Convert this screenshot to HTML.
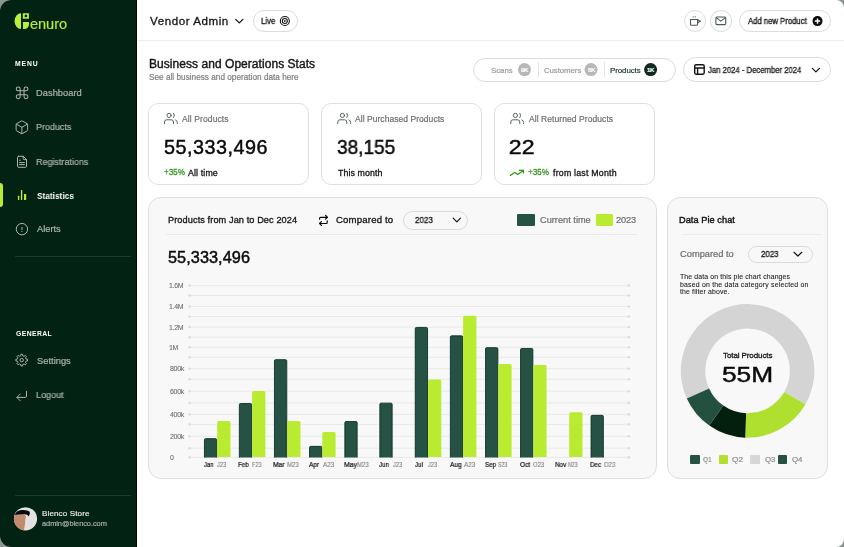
<!DOCTYPE html>
<html><head><meta charset="utf-8"><style>
html,body{margin:0;padding:0;width:844px;height:547px;overflow:hidden;background:#8c9692;}
#app{position:absolute;left:0;top:0;width:844px;height:547px;border-radius:11px 8px 8px 11px;overflow:hidden;background:#ffffff;font-family:"Liberation Sans",sans-serif;}
.t{position:absolute;white-space:nowrap;will-change:transform;}
.bd{position:absolute;width:13px;height:6px;line-height:6px;font-size:6.2px;font-weight:700;color:#fff;text-align:center;letter-spacing:-0.4px;will-change:transform;-webkit-text-stroke:0.15px #fff;}
</style></head><body><div id="app">
<div style="position:absolute;left:0px;top:0px;width:136px;height:547px;background:#022214;"></div><div style="position:absolute;left:136px;top:0px;width:1px;height:547px;background:#000;"></div><div style="position:absolute;left:137px;top:40px;width:707px;height:1px;background:#ececec;"></div><div style="position:absolute;left:0px;top:183.4px;width:3.2px;height:23.6px;background:#b9ec30;border-radius:0 3px 3px 0;"></div><div style="position:absolute;left:15px;top:256px;width:116px;height:1px;background:#1d3a2d;"></div><div style="position:absolute;left:15px;top:495.2px;width:116px;height:1px;background:#1d3a2d;"></div><div style="position:absolute;left:253.4px;top:10.2px;width:45px;height:21.5px;box-sizing:border-box;border:1px solid #dcdcdc;border-radius:11px;"></div><div style="position:absolute;left:683.8px;top:10.2px;width:22px;height:22px;box-sizing:border-box;border:1px solid #dedede;border-radius:50%;"></div><div style="position:absolute;left:709.8px;top:10.2px;width:22.4px;height:22px;box-sizing:border-box;border:1px solid #dedede;border-radius:50%;"></div><div style="position:absolute;left:739.1px;top:10.2px;width:92px;height:22px;box-sizing:border-box;border:1px solid #dcdcdc;border-radius:11px;"></div><div style="position:absolute;left:473px;top:57.5px;width:203px;height:24.2px;box-sizing:border-box;border:1px solid #dcdcdc;border-radius:12px;"></div><div style="position:absolute;left:537.5px;top:62px;width:1px;height:15px;background:#e4e4e4;"></div><div style="position:absolute;left:603.7px;top:62px;width:1px;height:15px;background:#e4e4e4;"></div><div style="position:absolute;left:683.3px;top:57.1px;width:147.3px;height:24.8px;box-sizing:border-box;border:1px solid #dcdcdc;border-radius:12.5px;"></div><div style="position:absolute;left:148px;top:102.9px;width:160.5px;height:81.9px;box-sizing:border-box;border:1px solid #e0e0e0;border-radius:10px;"></div><div style="position:absolute;left:321.3px;top:102.9px;width:160.5px;height:81.9px;box-sizing:border-box;border:1px solid #e0e0e0;border-radius:10px;"></div><div style="position:absolute;left:494.3px;top:102.9px;width:160.5px;height:81.9px;box-sizing:border-box;border:1px solid #e0e0e0;border-radius:10px;"></div><div style="position:absolute;left:148.2px;top:197.3px;width:508.5px;height:282.0px;box-sizing:border-box;background:#f8f8f8;border:1px solid #dedede;border-radius:13px;"></div><div style="position:absolute;left:667.3px;top:197.2px;width:160.7px;height:282.0px;box-sizing:border-box;background:#f8f8f8;border:1px solid #dedede;border-radius:13px;"></div><div style="position:absolute;left:166.2px;top:234px;width:470.6px;height:1px;background:#e9e9e9;"></div><div style="position:absolute;left:681.8px;top:234px;width:140px;height:1px;background:#ebebeb;"></div><div style="position:absolute;left:402.7px;top:211px;width:65.8px;height:18.8px;box-sizing:border-box;border:1px solid #dadada;border-radius:9.5px;"></div><div style="position:absolute;left:747.5px;top:245.5px;width:65.9px;height:17px;box-sizing:border-box;border:1px solid #dadada;border-radius:8.5px;"></div><div style="position:absolute;left:516.8px;top:214px;width:18.2px;height:11.7px;background:#255244;border-radius:1px;"></div><div style="position:absolute;left:595.6px;top:214px;width:17.8px;height:11.7px;background:#b9ec30;border-radius:1px;"></div><div style="position:absolute;left:690.3px;top:455px;width:9.6px;height:9.2px;background:#255244;border-radius:1px;"></div><div style="position:absolute;left:718.5px;top:455px;width:9.6px;height:9.2px;background:#b3e030;border-radius:1px;"></div><div style="position:absolute;left:750px;top:455px;width:9.6px;height:9.2px;background:#d6d6d6;border-radius:1px;"></div><div style="position:absolute;left:777.9px;top:455px;width:9.6px;height:9.2px;background:#255244;border-radius:1px;"></div>
<svg width="844" height="547" viewBox="0 0 844 547" style="position:absolute;left:0;top:0"><line x1="190" y1="285.6" x2="629" y2="285.6" stroke="#e9e9e9" stroke-width="1"/><circle cx="189.6" cy="285.6" r="1.3" fill="#dcdcdc"/><circle cx="628.8" cy="285.6" r="1.3" fill="#dcdcdc"/><line x1="190" y1="306.5" x2="629" y2="306.5" stroke="#e9e9e9" stroke-width="1"/><circle cx="189.6" cy="306.5" r="1.3" fill="#dcdcdc"/><circle cx="628.8" cy="306.5" r="1.3" fill="#dcdcdc"/><line x1="190" y1="327.1" x2="629" y2="327.1" stroke="#e9e9e9" stroke-width="1"/><circle cx="189.6" cy="327.1" r="1.3" fill="#dcdcdc"/><circle cx="628.8" cy="327.1" r="1.3" fill="#dcdcdc"/><line x1="190" y1="347.3" x2="629" y2="347.3" stroke="#e9e9e9" stroke-width="1"/><circle cx="189.6" cy="347.3" r="1.3" fill="#dcdcdc"/><circle cx="628.8" cy="347.3" r="1.3" fill="#dcdcdc"/><line x1="190" y1="368.7" x2="629" y2="368.7" stroke="#e9e9e9" stroke-width="1"/><circle cx="189.6" cy="368.7" r="1.3" fill="#dcdcdc"/><circle cx="628.8" cy="368.7" r="1.3" fill="#dcdcdc"/><line x1="190" y1="391.2" x2="629" y2="391.2" stroke="#e9e9e9" stroke-width="1"/><circle cx="189.6" cy="391.2" r="1.3" fill="#dcdcdc"/><circle cx="628.8" cy="391.2" r="1.3" fill="#dcdcdc"/><line x1="190" y1="414.4" x2="629" y2="414.4" stroke="#e9e9e9" stroke-width="1"/><circle cx="189.6" cy="414.4" r="1.3" fill="#dcdcdc"/><circle cx="628.8" cy="414.4" r="1.3" fill="#dcdcdc"/><line x1="190" y1="436.3" x2="629" y2="436.3" stroke="#e9e9e9" stroke-width="1"/><circle cx="189.6" cy="436.3" r="1.3" fill="#dcdcdc"/><circle cx="628.8" cy="436.3" r="1.3" fill="#dcdcdc"/><line x1="190" y1="457.4" x2="629" y2="457.4" stroke="#e9e9e9" stroke-width="1"/><circle cx="189.6" cy="457.4" r="1.3" fill="#dcdcdc"/><circle cx="628.8" cy="457.4" r="1.3" fill="#dcdcdc"/><line x1="190" y1="295.5" x2="629" y2="295.5" stroke="#e9e9e9" stroke-width="1"/><circle cx="189.6" cy="295.5" r="1.3" fill="#dcdcdc"/><circle cx="628.8" cy="295.5" r="1.3" fill="#dcdcdc"/><line x1="190" y1="316.5" x2="629" y2="316.5" stroke="#e9e9e9" stroke-width="1"/><circle cx="189.6" cy="316.5" r="1.3" fill="#dcdcdc"/><circle cx="628.8" cy="316.5" r="1.3" fill="#dcdcdc"/><line x1="190" y1="337.2" x2="629" y2="337.2" stroke="#e9e9e9" stroke-width="1"/><circle cx="189.6" cy="337.2" r="1.3" fill="#dcdcdc"/><circle cx="628.8" cy="337.2" r="1.3" fill="#dcdcdc"/><line x1="190" y1="357.3" x2="629" y2="357.3" stroke="#e9e9e9" stroke-width="1"/><circle cx="189.6" cy="357.3" r="1.3" fill="#dcdcdc"/><circle cx="628.8" cy="357.3" r="1.3" fill="#dcdcdc"/><line x1="190" y1="379.3" x2="629" y2="379.3" stroke="#e9e9e9" stroke-width="1"/><circle cx="189.6" cy="379.3" r="1.3" fill="#dcdcdc"/><circle cx="628.8" cy="379.3" r="1.3" fill="#dcdcdc"/><line x1="190" y1="402.9" x2="629" y2="402.9" stroke="#e9e9e9" stroke-width="1"/><circle cx="189.6" cy="402.9" r="1.3" fill="#dcdcdc"/><circle cx="628.8" cy="402.9" r="1.3" fill="#dcdcdc"/><line x1="190" y1="424.4" x2="629" y2="424.4" stroke="#e9e9e9" stroke-width="1"/><circle cx="189.6" cy="424.4" r="1.3" fill="#dcdcdc"/><circle cx="628.8" cy="424.4" r="1.3" fill="#dcdcdc"/><line x1="190" y1="448.2" x2="629" y2="448.2" stroke="#e9e9e9" stroke-width="1"/><circle cx="189.6" cy="448.2" r="1.3" fill="#dcdcdc"/><circle cx="628.8" cy="448.2" r="1.3" fill="#dcdcdc"/><path d="M204.45,457.5 V439.85 Q204.45,438.65 205.65,438.65 H215.55 Q216.75,438.65 216.75,439.85 V457.5" fill="#255244" stroke="#0c3325" stroke-width="0.9"/><path d="M217.2,457.0 V422.4 Q217.2,420.9 218.7,420.9 H229.0 Q230.5,420.9 230.5,422.4 V457.0 Z" fill="#b9ec30"/><path d="M239.35,457.5 V404.75 Q239.35,403.55 240.55,403.55 H250.45 Q251.65,403.55 251.65,404.75 V457.5" fill="#255244" stroke="#0c3325" stroke-width="0.9"/><path d="M252.1,457.0 V392.5 Q252.1,391.0 253.6,391.0 H263.9 Q265.4,391.0 265.4,392.5 V457.0 Z" fill="#b9ec30"/><path d="M274.45,457.5 V360.85 Q274.45,359.65 275.65,359.65 H285.55 Q286.75,359.65 286.75,360.85 V457.5" fill="#255244" stroke="#0c3325" stroke-width="0.9"/><path d="M287.2,457.0 V422.4 Q287.2,420.9 288.7,420.9 H299.0 Q300.5,420.9 300.5,422.4 V457.0 Z" fill="#b9ec30"/><path d="M309.55,457.5 V447.55 Q309.55,446.35 310.75,446.35 H320.65 Q321.85,446.35 321.85,447.55 V457.5" fill="#255244" stroke="#0c3325" stroke-width="0.9"/><path d="M322.3,457.0 V433.4 Q322.3,431.9 323.8,431.9 H334.1 Q335.6,431.9 335.6,433.4 V457.0 Z" fill="#b9ec30"/><path d="M344.85,457.5 V422.75 Q344.85,421.55 346.05,421.55 H355.95 Q357.15,421.55 357.15,422.75 V457.5" fill="#255244" stroke="#0c3325" stroke-width="0.9"/><path d="M379.85,457.5 V404.35 Q379.85,403.15 381.05,403.15 H390.95 Q392.15,403.15 392.15,404.35 V457.5" fill="#255244" stroke="#0c3325" stroke-width="0.9"/><path d="M415.25,457.5 V328.65 Q415.25,327.45 416.45,327.45 H426.35 Q427.55,327.45 427.55,328.65 V457.5" fill="#255244" stroke="#0c3325" stroke-width="0.9"/><path d="M428.0,457.0 V381.1 Q428.0,379.6 429.5,379.6 H439.8 Q441.3,379.6 441.3,381.1 V457.0 Z" fill="#b9ec30"/><path d="M450.35,457.5 V337.05 Q450.35,335.85 451.55,335.85 H461.45 Q462.65,335.85 462.65,337.05 V457.5" fill="#255244" stroke="#0c3325" stroke-width="0.9"/><path d="M463.09999999999997,457.0 V317.3 Q463.09999999999997,315.8 464.59999999999997,315.8 H474.9 Q476.4,315.8 476.4,317.3 V457.0 Z" fill="#b9ec30"/><path d="M485.55,457.5 V348.85 Q485.55,347.65 486.75,347.65 H496.65 Q497.85,347.65 497.85,348.85 V457.5" fill="#255244" stroke="#0c3325" stroke-width="0.9"/><path d="M498.3,457.0 V365.5 Q498.3,364.0 499.8,364.0 H510.1 Q511.6,364.0 511.6,365.5 V457.0 Z" fill="#b9ec30"/><path d="M520.55,457.5 V349.65 Q520.55,348.45 521.75,348.45 H531.65 Q532.85,348.45 532.85,349.65 V457.5" fill="#255244" stroke="#0c3325" stroke-width="0.9"/><path d="M533.3000000000001,457.0 V366.5 Q533.3000000000001,365.0 534.8000000000001,365.0 H545.1 Q546.6,365.0 546.6,366.5 V457.0 Z" fill="#b9ec30"/><path d="M569.2,457.0 V413.7 Q569.2,412.2 570.7,412.2 H581.0 Q582.5,412.2 582.5,413.7 V457.0 Z" fill="#b9ec30"/><path d="M591.05,457.5 V416.55 Q591.05,415.35 592.25,415.35 H602.15 Q603.35,415.35 603.35,416.55 V457.5" fill="#255244" stroke="#0c3325" stroke-width="0.9"/><path d="M686.81,398.60 A66.8,66.8 0 1 1 805.45,404.30 L784.23,392.05 A42.3,42.3 0 1 0 709.11,388.44 Z" fill="#d3d4d3"/><path d="M805.45,404.30 A66.8,66.8 0 0 1 745.27,437.66 L746.12,413.17 A42.3,42.3 0 0 0 784.23,392.05 Z" fill="#afe030"/><path d="M745.27,437.66 A66.8,66.8 0 0 1 709.29,425.62 L723.34,405.55 A42.3,42.3 0 0 0 746.12,413.17 Z" fill="#03200f"/><path d="M709.29,425.62 A66.8,66.8 0 0 1 686.81,398.60 L709.11,388.44 A42.3,42.3 0 0 0 723.34,405.55 Z" fill="#24503f"/><path d="M21,13.3 A6.4,7.85 0 0 0 21,29.1 Z" fill="#bdee3c"/><path d="M22.8,13.3 H28.9 V18.7 H22.8 Z M25.9,14.6 a1.35,1.35 0 1 0 0.01,0 Z" fill="#bdee3c" fill-rule="evenodd"/><path d="M23,21.9 H29 V24 Q29,29.1 23.8,29.1 H23 Z" fill="#bdee3c"/><g transform="translate(14.3,85.0) scale(0.65)" fill="none" stroke="#aeb4b0" stroke-width="1.55" stroke-linecap="round" stroke-linejoin="round"><path d="M15 6v12a3 3 0 1 0 3-3H6a3 3 0 1 0 3 3V6a3 3 0 1 0-3 3h12a3 3 0 1 0-3-3"/></g><g transform="translate(14.2,119.6) scale(0.64)" fill="none" stroke="#aeb4b0" stroke-width="1.55" stroke-linecap="round" stroke-linejoin="round"><path d="M21 8a2 2 0 0 0-1-1.73l-7-4a2 2 0 0 0-2 0l-7 4A2 2 0 0 0 3 8v8a2 2 0 0 0 1 1.73l7 4a2 2 0 0 0 2 0l7-4A2 2 0 0 0 21 16Z"/><path d="M3.3 7 12 12l8.7-5"/><path d="M12 22V12"/></g><g fill="none" stroke="#aeb4b0" stroke-width="1" stroke-linejoin="round" stroke-linecap="round"><path d="M18.6,156.3 H23.2 L26.5,159.6 V166.2 Q26.5,167.3 25.4,167.3 H18.6 Q17.5,167.3 17.5,166.2 V157.4 Q17.5,156.3 18.6,156.3 Z"/><path d="M23.2,156.3 V158.6 Q23.2,159.6 24.2,159.6 H26.5"/><path d="M19.5,160.2 H20.4 M19.5,162.6 H24.4 M19.5,164.6 H24.4"/></g><g fill="#b9ec30"><rect x="17.9" y="195.7" width="1.4" height="4.4" rx="0.6"/><rect x="20.9" y="190" width="1.4" height="10.1" rx="0.6"/><rect x="24" y="193.9" width="2.2" height="6.2" rx="0.6"/></g><g fill="none" stroke="#aeb4b0" stroke-width="1"><circle cx="21.95" cy="229.15" r="5.7"/><path d="M21.95,227 V229.9"/></g><circle cx="21.95" cy="231.4" r="0.6" fill="#aeb4b0"/><g fill="none" stroke="#aeb4b0" stroke-width="1" stroke-linejoin="round"><path d="M20.69,355.72 L20.88,354.26 L22.52,354.26 L22.71,355.72 L24.08,356.28 L25.25,355.39 L26.41,356.55 L25.52,357.72 L26.08,359.09 L27.54,359.28 L27.54,360.92 L26.08,361.11 L25.52,362.48 L26.41,363.65 L25.25,364.81 L24.08,363.92 L22.71,364.48 L22.52,365.94 L20.88,365.94 L20.69,364.48 L19.32,363.92 L18.15,364.81 L16.99,363.65 L17.88,362.48 L17.32,361.11 L15.86,360.92 L15.86,359.28 L17.32,359.09 L17.88,357.72 L16.99,356.55 L18.15,355.39 L19.32,356.28 Z"/><circle cx="21.7" cy="360.1" r="1.7"/></g><g fill="none" stroke="#aeb4b0" stroke-width="1" stroke-linecap="round" stroke-linejoin="round"><path d="M26.5,391.3 V396.2 Q26.5,397.4 25.3,397.4 H17"/><path d="M20.2,394.1 L16.9,397.4 L20.2,400.7"/></g><clipPath id="av"><circle cx="25.5" cy="518.8" r="11.6"/></clipPath><g clip-path="url(#av)"><rect x="13" y="506" width="26" height="26" fill="#e2e2e2"/><path d="M13,515 Q15,513.5 19,513.6 Q24,513.8 26,516 Q25,520 25,524 Q24.5,528 23.5,532 H13 Z" fill="#c48a6c"/><path d="M14.8,515 Q16,510.5 21.5,510 Q27.5,509.6 29.8,511.8 Q30.3,514.5 28.8,516.3 Q27.5,514.5 24.5,514.3 Q19,514 14.8,515 Z" fill="#0a0a0a"/><path d="M17.5,515.5 h2 M21,516.5 h1.5 M19,519.5 h1 M22,520 h1" stroke="#9aa39f" stroke-width="0.7"/></g><path d="M235.7,19.4 L239.3,22.9 L242.9,19.4" fill="none" stroke="#141414" stroke-width="1.3" stroke-linecap="round" stroke-linejoin="round"/><g fill="none" stroke="#141414" stroke-width="1.1"><circle cx="284.85" cy="21" r="4.5"/><circle cx="284.85" cy="21" r="2.5"/></g><circle cx="284.85" cy="21" r="0.9" fill="#141414"/><g fill="none" stroke="#4a5a52" stroke-width="1.1" stroke-linejoin="round"><path d="M690.5,19.5 H697.6 V24.3 Q697.6,25.3 696.6,25.3 H691.5 Q690.5,25.3 690.5,24.3 Z"/><path d="M697.6,19.8 L700.4,21.2 L697.6,22.8"/></g><g fill="#4a5a52"><rect x="692.6" y="16.5" width="1.2" height="0.9"/><rect x="694.8" y="16.5" width="1.2" height="0.9"/></g><g fill="none" stroke="#4a5a52" stroke-width="1.1" stroke-linejoin="round"><rect x="715.9" y="17" width="9.8" height="7.6" rx="1"/><path d="M716.2,17.6 L720.8,21.1 L725.4,17.6"/></g><circle cx="817.5" cy="21.1" r="5" fill="#0a0a0a"/><path d="M817.5,18.4 V23.8 M814.8,21.1 H820.2" stroke="#fff" stroke-width="1.5"/><circle cx="524.5" cy="69.6" r="6.5" fill="#b8b8b8"/><circle cx="591" cy="69.6" r="6.5" fill="#b8b8b8"/><circle cx="650.6" cy="69.6" r="6.5" fill="#0f2a1f"/><g fill="none" stroke="#141414" stroke-width="1.4"><rect x="694.7" y="64.7" width="9.5" height="9.5" rx="1.4"/><path d="M694.6,68 H704.2 M697.6,68 V74.2"/></g><path d="M812.4,68.4 L815.9,71.9 L819.4,68.4" fill="none" stroke="#141414" stroke-width="1.2" stroke-linecap="round" stroke-linejoin="round"/><g transform="translate(0,0)" fill="none" stroke="#55625b" stroke-width="1" stroke-linecap="round"><circle cx="169.1" cy="115.4" r="2.1"/><path d="M173.6,113.3 Q175.3,115.4 173.6,117.5"/><path d="M164.5,123.6 V122 Q164.5,119.8 166.7,119.8 H171.3 Q173.5,119.8 173.5,122 V123.6"/><path d="M175.6,119.9 Q177.3,120.5 177.3,122.4 V123.6"/></g><g transform="translate(173.3,0)" fill="none" stroke="#55625b" stroke-width="1" stroke-linecap="round"><circle cx="169.1" cy="115.4" r="2.1"/><path d="M173.6,113.3 Q175.3,115.4 173.6,117.5"/><path d="M164.5,123.6 V122 Q164.5,119.8 166.7,119.8 H171.3 Q173.5,119.8 173.5,122 V123.6"/><path d="M175.6,119.9 Q177.3,120.5 177.3,122.4 V123.6"/></g><g transform="translate(346.3,0)" fill="none" stroke="#55625b" stroke-width="1" stroke-linecap="round"><circle cx="169.1" cy="115.4" r="2.1"/><path d="M173.6,113.3 Q175.3,115.4 173.6,117.5"/><path d="M164.5,123.6 V122 Q164.5,119.8 166.7,119.8 H171.3 Q173.5,119.8 173.5,122 V123.6"/><path d="M175.6,119.9 Q177.3,120.5 177.3,122.4 V123.6"/></g><g fill="none" stroke="#2a9a10" stroke-width="1.2" stroke-linecap="round" stroke-linejoin="round"><path d="M510.4,175.5 L514.7,172.4 L517.7,174.4 L523.4,170.4"/><path d="M519.3,170.4 H523.4 V172.9"/></g><g fill="none" stroke="#0a0a0a" stroke-width="1.2" stroke-linecap="round" stroke-linejoin="round"><path d="M319.6,219.2 V218.3 Q319.6,217.3 320.6,217.3 H327.4"/><path d="M325.6,215.5 L327.4,217.3 L325.6,219.1"/><path d="M327.2,220.9 V222.5 Q327.2,223.5 326.2,223.5 H319.6"/><path d="M321.4,221.7 L319.6,223.5 L321.4,225.3"/></g><path d="M453.2,218.2 L456.8,221.8 L460.4,218.2" fill="none" stroke="#141414" stroke-width="1.2" stroke-linecap="round" stroke-linejoin="round"/><path d="M794,252.3 L797.9,256 L801.8,252.3" fill="none" stroke="#141414" stroke-width="1.2" stroke-linecap="round" stroke-linejoin="round"/></svg>
<div class="bd" style="left:518px;top:66.9px;">9K</div><div class="bd" style="left:584.5px;top:66.9px;">5K</div><div class="bd" style="left:644.1px;top:66.9px;">1K</div>
<div class="t" style="left:29.74px;top:16.64px;font-size:14.6px;line-height:14.6px;color:#b8ec3a;letter-spacing:-0.073px;-webkit-text-stroke:0.2px #b8ec3a;">enuro</div>
<div class="t" style="left:14.67px;top:61.04px;font-size:6.8px;line-height:6.8px;color:#ffffff;font-weight:700;letter-spacing:0.915px;">MENU</div>
<div class="t" style="left:36.17px;top:88.53px;font-size:9.3px;line-height:9.3px;color:#aeb4b0;letter-spacing:0.032px;-webkit-text-stroke:0.2px #aeb4b0;">Dashboard</div>
<div class="t" style="left:36.17px;top:122.63px;font-size:9.3px;line-height:9.3px;color:#aeb4b0;-webkit-text-stroke:0.2px #aeb4b0;transform:scaleX(0.9640);transform-origin:0.73px 0;">Products</div>
<div class="t" style="left:36.17px;top:157.83px;font-size:9.3px;line-height:9.3px;color:#aeb4b0;-webkit-text-stroke:0.2px #aeb4b0;transform:scaleX(0.9651);transform-origin:0.73px 0;">Registrations</div>
<div class="t" style="left:36.90px;top:224.73px;font-size:9.3px;line-height:9.3px;color:#aeb4b0;letter-spacing:-0.016px;-webkit-text-stroke:0.2px #aeb4b0;">Alerts</div>
<div class="t" style="left:36.75px;top:191.53px;font-size:9.3px;line-height:9.3px;color:#ffffff;font-weight:700;transform:scaleX(0.8915);transform-origin:0.15px 0;">Statistics</div>
<div class="t" style="left:16.09px;top:330.74px;font-size:6.8px;line-height:6.8px;color:#ffffff;font-weight:700;letter-spacing:0.414px;">GENERAL</div>
<div class="t" style="left:36.61px;top:356.63px;font-size:9.3px;line-height:9.3px;color:#aeb4b0;letter-spacing:0.025px;-webkit-text-stroke:0.2px #aeb4b0;">Settings</div>
<div class="t" style="left:36.17px;top:390.73px;font-size:9.3px;line-height:9.3px;color:#aeb4b0;-webkit-text-stroke:0.2px #aeb4b0;transform:scaleX(0.9730);transform-origin:0.73px 0;">Logout</div>
<div class="t" style="left:42.07px;top:510.04px;font-size:8.1px;line-height:8.1px;color:#eceeec;letter-spacing:0.099px;-webkit-text-stroke:0.15px #eceeec;">Blenco Store</div>
<div class="t" style="left:42.47px;top:520.04px;font-size:7.4px;line-height:7.4px;color:#a9afab;letter-spacing:-0.040px;-webkit-text-stroke:0.2px #a9afab;">admin@blenco.com</div>
<div class="t" style="left:150.30px;top:15.48px;font-size:11.6px;line-height:11.6px;color:#141414;letter-spacing:0.553px;-webkit-text-stroke:0.3px #141414;">Vendor Admin</div>
<div class="t" style="left:261.02px;top:16.64px;font-size:8.7px;line-height:8.7px;color:#141414;-webkit-text-stroke:0.3px #141414;transform:scaleX(0.8977);transform-origin:0.68px 0;">Live</div>
<div class="t" style="left:748.00px;top:17.27px;font-size:8.3px;line-height:8.3px;color:#141414;-webkit-text-stroke:0.3px #141414;transform:scaleX(0.9282);transform-origin:0.00px 0;">Add new Product</div>
<div class="t" style="left:148.76px;top:57.64px;font-size:12.0px;line-height:12.0px;color:#161616;letter-spacing:0.048px;-webkit-text-stroke:0.4px #161616;">Business and Operations Stats</div>
<div class="t" style="left:149.44px;top:73.56px;font-size:8.2px;line-height:8.2px;color:#7d7d7d;letter-spacing:0.021px;-webkit-text-stroke:0.2px #7d7d7d;">See all business and operation data here</div>
<div class="t" style="left:490.86px;top:67.10px;font-size:7.8px;line-height:7.8px;color:#9a9a9a;letter-spacing:0.002px;-webkit-text-stroke:0.2px #9a9a9a;">Scans</div>
<div class="t" style="left:543.63px;top:67.10px;font-size:7.8px;line-height:7.8px;color:#9a9a9a;letter-spacing:-0.050px;-webkit-text-stroke:0.2px #9a9a9a;">Customers</div>
<div class="t" style="left:609.98px;top:67.01px;font-size:7.9px;line-height:7.9px;color:#0f2a1f;letter-spacing:-0.073px;-webkit-text-stroke:0.15px #0f2a1f;">Products</div>
<div class="t" style="left:708.37px;top:65.82px;font-size:8.6px;line-height:8.6px;color:#1a1a1a;-webkit-text-stroke:0.3px #1a1a1a;transform:scaleX(0.8963);transform-origin:0.13px 0;">Jan 2024 - December 2024</div>
<div class="t" style="left:181.70px;top:114.60px;font-size:8.5px;line-height:8.5px;color:#6f6f6f;letter-spacing:0.110px;-webkit-text-stroke:0.2px #6f6f6f;">All Products</div>
<div class="t" style="left:355.00px;top:114.60px;font-size:8.5px;line-height:8.5px;color:#6f6f6f;letter-spacing:0.048px;-webkit-text-stroke:0.2px #6f6f6f;">All Purchased Products</div>
<div class="t" style="left:528.80px;top:114.60px;font-size:8.5px;line-height:8.5px;color:#6f6f6f;letter-spacing:0.069px;-webkit-text-stroke:0.2px #6f6f6f;">All Returned Products</div>
<div class="t" style="left:164.08px;top:137.64px;font-size:19.8px;line-height:19.8px;color:#0a0a0a;letter-spacing:0.503px;-webkit-text-stroke:0.45px #0a0a0a;">55,333,496</div>
<div class="t" style="left:337.28px;top:137.64px;font-size:19.8px;line-height:19.8px;color:#0a0a0a;-webkit-text-stroke:0.45px #0a0a0a;transform:scaleX(0.9621);transform-origin:0.62px 0;">38,155</div>
<div class="t" style="left:509.37px;top:137.64px;font-size:19.8px;line-height:19.8px;color:#0a0a0a;-webkit-text-stroke:0.45px #0a0a0a;transform:scaleX(1.1679);transform-origin:0.93px 0;">22</div>
<div class="t" style="left:164.26px;top:168.13px;font-size:9.3px;line-height:9.3px;color:#2e8f18;-webkit-text-stroke:0.3px #2e8f18;transform:scaleX(0.8658);transform-origin:0.44px 0;">+35%</div>
<div class="t" style="left:187.70px;top:168.55px;font-size:8.8px;line-height:8.8px;color:#141414;letter-spacing:0.130px;-webkit-text-stroke:0.3px #141414;">All time</div>
<div class="t" style="left:337.86px;top:168.55px;font-size:8.8px;line-height:8.8px;color:#141414;letter-spacing:0.100px;-webkit-text-stroke:0.3px #141414;">This month</div>
<div class="t" style="left:528.36px;top:168.13px;font-size:9.3px;line-height:9.3px;color:#2e8f18;-webkit-text-stroke:0.3px #2e8f18;transform:scaleX(0.8658);transform-origin:0.44px 0;">+35%</div>
<div class="t" style="left:552.50px;top:168.55px;font-size:8.8px;line-height:8.8px;color:#141414;letter-spacing:0.211px;-webkit-text-stroke:0.3px #141414;">from last Month</div>
<div class="t" style="left:167.98px;top:215.61px;font-size:9.2px;line-height:9.2px;color:#141414;letter-spacing:0.087px;-webkit-text-stroke:0.3px #141414;">Products from Jan to Dec 2024</div>
<div class="t" style="left:336.35px;top:215.47px;font-size:9.6px;line-height:9.6px;color:#141414;letter-spacing:0.174px;-webkit-text-stroke:0.3px #141414;">Compared to</div>
<div class="t" style="left:415.40px;top:216.40px;font-size:8.5px;line-height:8.5px;color:#141414;-webkit-text-stroke:0.3px #141414;transform:scaleX(0.9413);transform-origin:0.40px 0;">2023</div>
<div class="t" style="left:539.57px;top:216.21px;font-size:9.2px;line-height:9.2px;color:#6b6b6b;letter-spacing:0.017px;-webkit-text-stroke:0.2px #6b6b6b;">Current time</div>
<div class="t" style="left:616.37px;top:216.21px;font-size:9.2px;line-height:9.2px;color:#6b6b6b;letter-spacing:-0.087px;-webkit-text-stroke:0.2px #6b6b6b;">2023</div>
<div class="t" style="left:168.19px;top:249.40px;font-size:16.3px;line-height:16.3px;color:#0a0a0a;letter-spacing:0.054px;-webkit-text-stroke:0.45px #0a0a0a;">55,333,496</div>
<div class="t" style="left:169.46px;top:282.27px;font-size:7.0px;line-height:7.0px;color:#6e6e6e;-webkit-text-stroke:0.1px #6e6e6e;letter-spacing:-0.3px;">1.6M</div>
<div class="t" style="left:169.46px;top:303.17px;font-size:7.0px;line-height:7.0px;color:#6e6e6e;-webkit-text-stroke:0.1px #6e6e6e;letter-spacing:-0.3px;">1.4M</div>
<div class="t" style="left:169.46px;top:323.77px;font-size:7.0px;line-height:7.0px;color:#6e6e6e;-webkit-text-stroke:0.1px #6e6e6e;letter-spacing:-0.3px;">1.2M</div>
<div class="t" style="left:169.46px;top:343.97px;font-size:7.0px;line-height:7.0px;color:#6e6e6e;-webkit-text-stroke:0.1px #6e6e6e;letter-spacing:-0.3px;">1M</div>
<div class="t" style="left:169.68px;top:365.37px;font-size:7.0px;line-height:7.0px;color:#6e6e6e;-webkit-text-stroke:0.1px #6e6e6e;letter-spacing:-0.3px;">800k</div>
<div class="t" style="left:169.57px;top:387.87px;font-size:7.0px;line-height:7.0px;color:#6e6e6e;-webkit-text-stroke:0.1px #6e6e6e;letter-spacing:-0.3px;">600k</div>
<div class="t" style="left:169.79px;top:411.07px;font-size:7.0px;line-height:7.0px;color:#6e6e6e;-webkit-text-stroke:0.1px #6e6e6e;letter-spacing:-0.3px;">400k</div>
<div class="t" style="left:169.57px;top:432.97px;font-size:7.0px;line-height:7.0px;color:#6e6e6e;-webkit-text-stroke:0.1px #6e6e6e;letter-spacing:-0.3px;">200k</div>
<div class="t" style="left:169.68px;top:454.07px;font-size:7.0px;line-height:7.0px;color:#6e6e6e;-webkit-text-stroke:0.1px #6e6e6e;letter-spacing:-0.3px;">0</div>
<div class="t" style="left:203.89px;top:460.87px;font-size:7.0px;line-height:7.0px;color:#141414;-webkit-text-stroke:0.22px #141414;transform:scaleX(0.8346);transform-origin:0.11px 0;">Jan</div>
<div class="t" style="left:217.49px;top:460.87px;font-size:7.0px;line-height:7.0px;color:#808080;-webkit-text-stroke:0.12px #808080;transform:scaleX(0.7987);transform-origin:0.11px 0;">J23</div>
<div class="t" style="left:238.35px;top:460.87px;font-size:7.0px;line-height:7.0px;color:#141414;-webkit-text-stroke:0.22px #141414;transform:scaleX(0.8815);transform-origin:0.55px 0;">Feb</div>
<div class="t" style="left:251.95px;top:460.87px;font-size:7.0px;line-height:7.0px;color:#808080;-webkit-text-stroke:0.12px #808080;transform:scaleX(0.7746);transform-origin:0.55px 0;">F23</div>
<div class="t" style="left:273.45px;top:460.87px;font-size:7.0px;line-height:7.0px;color:#141414;-webkit-text-stroke:0.22px #141414;transform:scaleX(0.9587);transform-origin:0.55px 0;">Mar</div>
<div class="t" style="left:287.05px;top:460.87px;font-size:7.0px;line-height:7.0px;color:#808080;-webkit-text-stroke:0.12px #808080;transform:scaleX(0.8603);transform-origin:0.55px 0;">M23</div>
<div class="t" style="left:309.10px;top:460.87px;font-size:7.0px;line-height:7.0px;color:#141414;-webkit-text-stroke:0.22px #141414;transform:scaleX(0.9209);transform-origin:0.00px 0;">Apr</div>
<div class="t" style="left:322.70px;top:460.87px;font-size:7.0px;line-height:7.0px;color:#808080;-webkit-text-stroke:0.12px #808080;transform:scaleX(0.9038);transform-origin:0.00px 0;">A23</div>
<div class="t" style="left:343.85px;top:460.87px;font-size:7.0px;line-height:7.0px;color:#141414;-webkit-text-stroke:0.22px #141414;transform:scaleX(0.9702);transform-origin:0.55px 0;">May</div>
<div class="t" style="left:357.45px;top:460.87px;font-size:7.0px;line-height:7.0px;color:#808080;-webkit-text-stroke:0.12px #808080;transform:scaleX(0.8603);transform-origin:0.55px 0;">M23</div>
<div class="t" style="left:379.29px;top:460.87px;font-size:7.0px;line-height:7.0px;color:#141414;-webkit-text-stroke:0.22px #141414;transform:scaleX(0.8717);transform-origin:0.11px 0;">Jun</div>
<div class="t" style="left:392.89px;top:460.87px;font-size:7.0px;line-height:7.0px;color:#808080;-webkit-text-stroke:0.12px #808080;transform:scaleX(0.7987);transform-origin:0.11px 0;">J23</div>
<div class="t" style="left:414.69px;top:460.87px;font-size:7.0px;line-height:7.0px;color:#141414;-webkit-text-stroke:0.22px #141414;transform:scaleX(0.8714);transform-origin:0.11px 0;">Jul</div>
<div class="t" style="left:428.29px;top:460.87px;font-size:7.0px;line-height:7.0px;color:#808080;-webkit-text-stroke:0.12px #808080;transform:scaleX(0.7987);transform-origin:0.11px 0;">J23</div>
<div class="t" style="left:449.90px;top:460.87px;font-size:7.0px;line-height:7.0px;color:#141414;-webkit-text-stroke:0.22px #141414;transform:scaleX(0.9451);transform-origin:0.00px 0;">Aug</div>
<div class="t" style="left:463.50px;top:460.87px;font-size:7.0px;line-height:7.0px;color:#808080;-webkit-text-stroke:0.12px #808080;transform:scaleX(0.9038);transform-origin:0.00px 0;">A23</div>
<div class="t" style="left:484.88px;top:460.87px;font-size:7.0px;line-height:7.0px;color:#141414;-webkit-text-stroke:0.22px #141414;transform:scaleX(0.8952);transform-origin:0.22px 0;">Sep</div>
<div class="t" style="left:498.48px;top:460.87px;font-size:7.0px;line-height:7.0px;color:#808080;-webkit-text-stroke:0.12px #808080;transform:scaleX(0.7279);transform-origin:0.22px 0;">S23</div>
<div class="t" style="left:519.77px;top:460.87px;font-size:7.0px;line-height:7.0px;color:#141414;-webkit-text-stroke:0.22px #141414;transform:scaleX(0.9258);transform-origin:0.33px 0;">Oct</div>
<div class="t" style="left:533.37px;top:460.87px;font-size:7.0px;line-height:7.0px;color:#808080;-webkit-text-stroke:0.12px #808080;transform:scaleX(0.8321);transform-origin:0.33px 0;">O23</div>
<div class="t" style="left:554.85px;top:460.87px;font-size:7.0px;line-height:7.0px;color:#141414;-webkit-text-stroke:0.22px #141414;transform:scaleX(0.8907);transform-origin:0.55px 0;">Nov</div>
<div class="t" style="left:568.45px;top:460.87px;font-size:7.0px;line-height:7.0px;color:#808080;-webkit-text-stroke:0.12px #808080;transform:scaleX(0.7244);transform-origin:0.55px 0;">N23</div>
<div class="t" style="left:590.05px;top:460.87px;font-size:7.0px;line-height:7.0px;color:#141414;-webkit-text-stroke:0.22px #141414;transform:scaleX(0.8820);transform-origin:0.55px 0;">Dec</div>
<div class="t" style="left:603.65px;top:460.87px;font-size:7.0px;line-height:7.0px;color:#808080;-webkit-text-stroke:0.12px #808080;transform:scaleX(0.8742);transform-origin:0.55px 0;">D23</div>
<div class="t" style="left:678.98px;top:215.61px;font-size:9.2px;line-height:9.2px;color:#141414;letter-spacing:0.063px;-webkit-text-stroke:0.4px #141414;">Data Pie chat</div>
<div class="t" style="left:679.56px;top:249.53px;font-size:9.3px;line-height:9.3px;color:#6b6b6b;letter-spacing:0.005px;-webkit-text-stroke:0.2px #6b6b6b;">Compared to</div>
<div class="t" style="left:760.51px;top:249.97px;font-size:8.3px;line-height:8.3px;color:#141414;-webkit-text-stroke:0.3px #141414;transform:scaleX(0.9527);transform-origin:0.39px 0;">2023</div>
<div class="t" style="left:679.89px;top:273.66px;font-size:6.9px;line-height:6.9px;color:#1a1a1a;letter-spacing:0.129px;-webkit-text-stroke:0.08px #1a1a1a;">The data on this pie chart changes</div>
<div class="t" style="left:679.57px;top:281.51px;font-size:6.9px;line-height:6.9px;color:#1a1a1a;letter-spacing:0.208px;-webkit-text-stroke:0.08px #1a1a1a;">based on the data category selected on</div>
<div class="t" style="left:680.00px;top:289.36px;font-size:6.9px;line-height:6.9px;color:#1a1a1a;letter-spacing:0.147px;-webkit-text-stroke:0.08px #1a1a1a;">the filter above.</div>
<div class="t" style="left:723.17px;top:352.03px;font-size:8.0px;line-height:8.0px;color:#141414;letter-spacing:-0.094px;-webkit-text-stroke:0.3px #141414;">Total Products</div>
<div class="t" style="left:722.09px;top:363.87px;font-size:22.6px;line-height:22.6px;color:#0a0a0a;-webkit-text-stroke:0.45px #0a0a0a;transform:scaleX(1.1645);transform-origin:0.71px 0;">55M</div>
<div class="t" style="left:702.83px;top:455.80px;font-size:7.8px;line-height:7.8px;color:#8a8a8a;-webkit-text-stroke:0.2px #8a8a8a;transform:scaleX(0.8228);transform-origin:0.37px 0;">Q1</div>
<div class="t" style="left:732.33px;top:455.80px;font-size:7.8px;line-height:7.8px;color:#8a8a8a;-webkit-text-stroke:0.2px #8a8a8a;transform:scaleX(1.0593);transform-origin:0.37px 0;">Q2</div>
<div class="t" style="left:764.53px;top:455.80px;font-size:7.8px;line-height:7.8px;color:#8a8a8a;-webkit-text-stroke:0.2px #8a8a8a;transform:scaleX(0.9873);transform-origin:0.37px 0;">Q3</div>
<div class="t" style="left:792.43px;top:455.80px;font-size:7.8px;line-height:7.8px;color:#8a8a8a;-webkit-text-stroke:0.2px #8a8a8a;transform:scaleX(1.0056);transform-origin:0.37px 0;">Q4</div>
</div></body></html>
